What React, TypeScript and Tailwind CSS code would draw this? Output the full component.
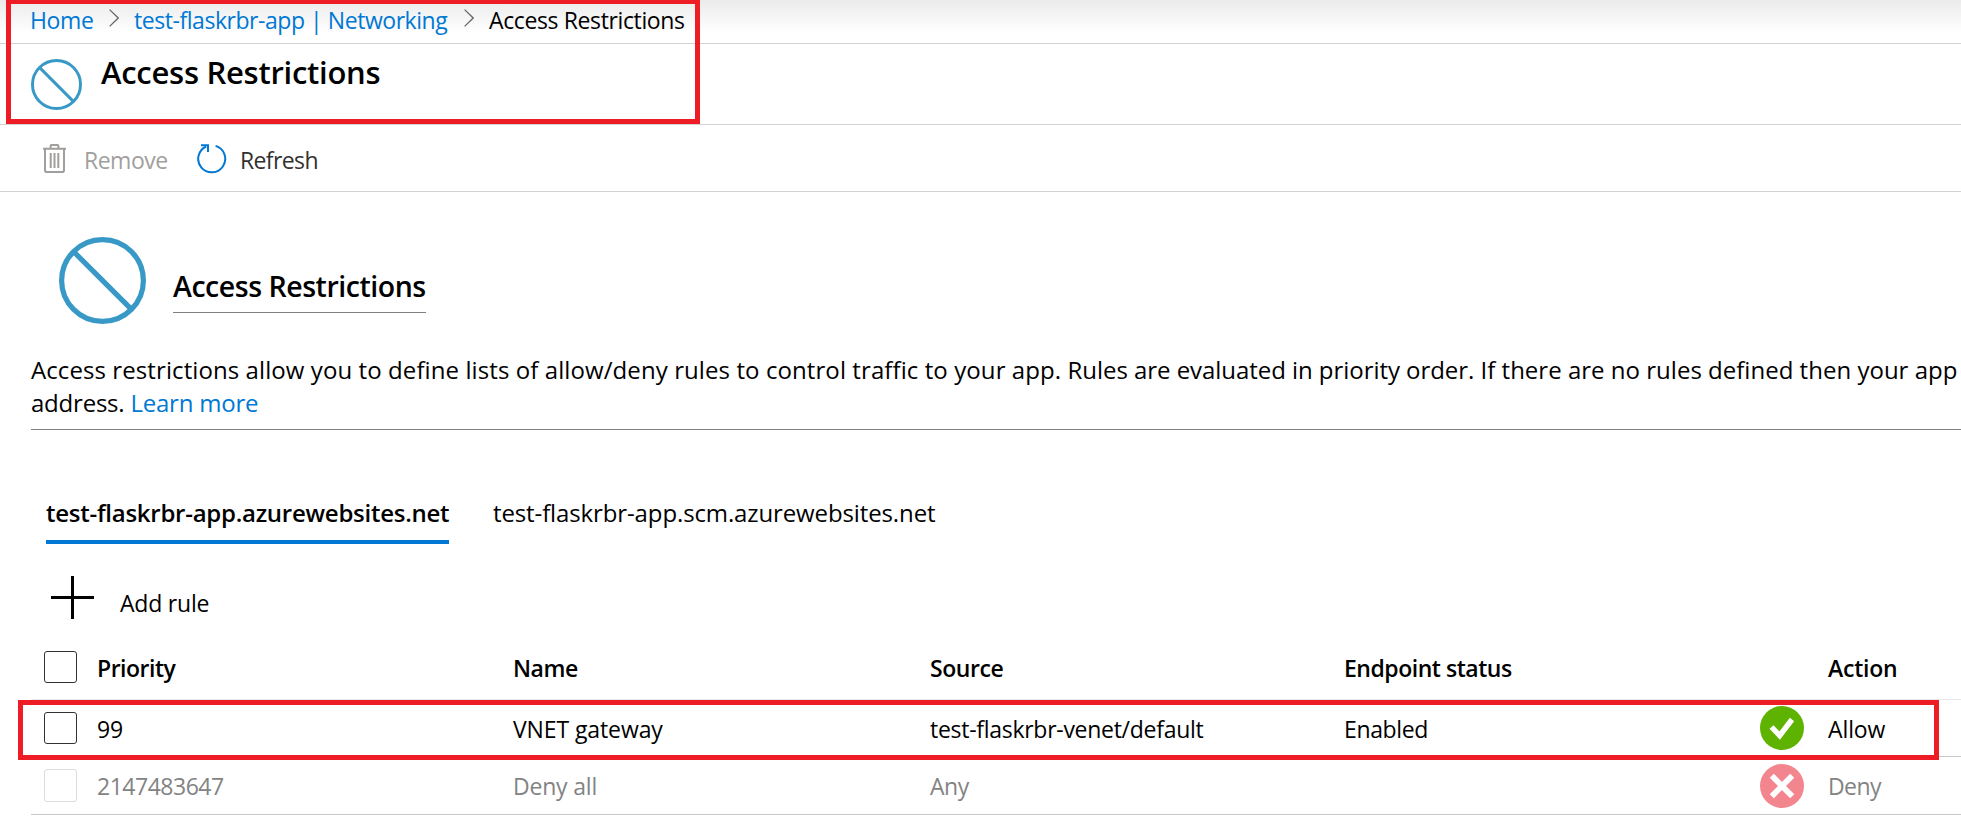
import React from "react";

function BlockedIcon({ className, strokeWidth }: { className: string; strokeWidth: number }) {
  const r = 50 - strokeWidth / 2;
  return (
    <svg viewBox="0 0 100 100" className={className} fill="none" stroke="#3999c6" strokeWidth={strokeWidth}>
      <circle cx="50" cy="50" r={r} />
      <path d="M17 17 83 83" />
    </svg>
  );
}

function Chevron({ className }: { className: string }) {
  return (
    <svg viewBox="0 0 10 18" className={className} fill="none" stroke="#666" strokeWidth="1.3">
      <path d="M0.6 0.6 9.2 9 0.6 17.4" />
    </svg>
  );
}

function TrashIcon() {
  return (
    <svg viewBox="0 0 23 29" className="h-[29px] w-[23px] shrink-0" fill="none" stroke="#a19f9d" strokeWidth="2">
      <path d="M0 4.7H23M7.6 4.5V1.8Q7.6 1 8.4 1H14.6Q15.4 1 15.4 1.8V4.5" />
      <path d="M2 4.7V26.2Q2 28 3.8 28H19.2Q21 28 21 26.2V4.7" />
      <path d="M7.7 9V24M11.5 9V24M15.3 9V24" />
    </svg>
  );
}

function RefreshIcon() {
  return (
    <svg viewBox="0 0 30 30" className="h-[30px] w-[30px] shrink-0" fill="none" stroke="#0078d4" strokeWidth="2">
      <path d="M18.6 1.9A13.5 13.5 0 1 1 9.2 2.5" />
      <path d="M4 1.3H11V8" />
    </svg>
  );
}

function AllowIcon() {
  return (
    <svg viewBox="0 0 44 44" className="h-[44px] w-[44px] shrink-0">
      <circle cx="22" cy="22" r="22" fill="#5db300" />
      <path d="M11.5 21 19.7 29.5 32 13.5" fill="none" stroke="#fff" strokeWidth="5.4" strokeLinejoin="miter" />
    </svg>
  );
}

function DenyIcon() {
  return (
    <svg viewBox="0 0 44 44" className="h-[44px] w-[44px] shrink-0">
      <circle cx="22" cy="22" r="22" fill="#f3858f" />
      <path d="M11.8 11.8 32.2 32.2M32.2 11.8 11.8 32.2" stroke="#fff" strokeWidth="5.8" />
    </svg>
  );
}

function Checkbox({ disabled = false }: { disabled?: boolean }) {
  return (
    <div
      className={
        disabled
          ? "ml-[13px] h-[33px] w-[33px] rounded-[3px] border border-[#dcdcdc]"
          : "ml-[13px] h-[32px] w-[33px] rounded-[3px] border border-[#323130]"
      }
    />
  );
}

const columns = "grid grid-cols-[66px_416px_417px_414px_416px_1fr] items-start whitespace-nowrap pl-[31px]";

export default function App() {
  return (
    <div className="relative h-[836px] w-[1961px] overflow-hidden bg-white font-['Open_Sans','Noto_Sans',sans-serif] text-[23px] leading-8 text-black">
      <nav className="flex h-[44px] items-start whitespace-nowrap border-b border-[#d2d2d2] bg-[linear-gradient(to_bottom,#ebebeb_0px,#ffffff_33px)] pl-[30px] pt-[4px]">
        <a className="w-[79px] tracking-[-0.34px] text-[#0078d4]">Home</a>
        <Chevron className="mt-[5px] h-[18px] w-[10px]" />
        <a className="ml-[15px] w-[330px] tracking-[-0.45px] text-[#0078d4]">test-flaskrbr-app | Networking</a>
        <Chevron className="mt-[5px] h-[18px] w-[10px]" />
        <span className="ml-[15px] tracking-[-0.38px]">Access Restrictions</span>
      </nav>

      <header className="flex h-[81px] items-start border-b border-[#d2d2d2] pl-[31px]">
        <BlockedIcon className="mt-[15px] h-[51px] w-[51px]" strokeWidth={5.8} />
        <h1 className="ml-[19px] mt-[8px] text-[31px] font-semibold leading-10 tracking-[-0.27px]">Access Restrictions</h1>
      </header>

      <div className="flex h-[67px] items-start border-b border-[#d2d2d2] pl-[43px] pt-[19px]">
        <div className="flex w-[154px] items-start gap-[18px] text-[#a19f9d]">
          <TrashIcon />
          <span className="tracking-[-0.5px]">Remove</span>
        </div>
        <div className="flex items-start gap-[13px] text-[#323130]">
          <RefreshIcon />
          <span className="tracking-[-0.62px]">Refresh</span>
        </div>
      </div>

      <section className="flex h-[161px] items-start pl-[59px] pt-[45px]">
        <BlockedIcon className="h-[87px] w-[87px]" strokeWidth={6} />
        <h2 className="ml-[27px] mt-[30px] h-[46px] w-[253px] whitespace-nowrap border-b border-[#808080] text-[28.5px] font-semibold leading-[38px] tracking-[-0.46px]">
          Access Restrictions
        </h2>
      </section>

      <div className="ml-[31px] h-[77px] whitespace-nowrap border-b border-[#808080] text-[24px] leading-[33px]">
        <p className="tracking-[0.015px]">
          <span className="tracking-[0.088px]">
            Access restrictions allow you to define lists of allow/deny rules to control traffic to your app.{" "}
          </span>
          <span className="tracking-[-0.05px]">Rules are evaluated in priority order. </span>
          If there are no rules defined then your app
        </p>
        <p className="tracking-[-0.22px]">
          address. <a className="text-[#0078d4]">Learn more</a>
        </p>
      </div>

      <div className="flex gap-[44px] whitespace-nowrap pl-[46px] pt-[67px] text-[24px]">
        <div className="h-[47px] w-[403px] border-b-4 border-[#0078d4] font-semibold tracking-[-0.262px]">
          test-flaskrbr-app.azurewebsites.net
        </div>
        <div className="tracking-[-0.12px]">test-flaskrbr-app.scm.azurewebsites.net</div>
      </div>

      <button className="mt-[32px] flex h-[76px] items-start pl-[51px] text-left">
        <svg viewBox="0 0 43 43" className="h-[43px] w-[43px]" stroke="#000" strokeWidth="3">
          <path d="M21.5 0V43M0 21.5H43" />
        </svg>
        <span className="ml-[26px] mt-[11px] tracking-[-0.2px]">Add rule</span>
      </button>

      <div className={columns + " h-[48px] border-b border-transparent font-semibold"}>
        <div className="-mt-px">
          <Checkbox />
        </div>
        <span className="tracking-[-0.49px]">Priority</span>
        <span className="tracking-[-0.41px]">Name</span>
        <span className="tracking-[-0.41px]">Source</span>
        <span className="tracking-[-0.47px]">Endpoint status</span>
        <span className="ml-[68px] tracking-[-0.21px]">Action</span>
      </div>
      <div className="-mt-px ml-[31px] h-px bg-[#e8e8e8]" />

      <div className={columns + " h-[56px] pt-[13px]"}>
        <div className="-mt-px">
          <Checkbox />
        </div>
        <span className="tracking-[-0.08px]">99</span>
        <span className="tracking-[-0.1px]">VNET gateway</span>
        <span className="tracking-[-0.28px]">test-flaskrbr-venet/default</span>
        <span className="tracking-[-0.35px]">Enabled</span>
        <div className="-mt-[7px] flex">
          <AllowIcon />
          <span className="ml-[24px] mt-[7px] tracking-[-0.1px]">Allow</span>
        </div>
      </div>
      <div className="ml-[31px] h-px bg-[#c8c8c8]" />

      <div className={columns + " h-[57px] pt-[13px] text-[#838383]"}>
        <div className="-mt-px">
          <Checkbox disabled />
        </div>
        <span className="tracking-[-0.48px]">2147483647</span>
        <span className="tracking-[-0.2px]">Deny all</span>
        <span className="tracking-[-0.5px]">Any</span>
        <span />
        <div className="-mt-[6px] flex">
          <DenyIcon />
          <span className="ml-[24px] mt-[6px] tracking-[-0.6px]">Deny</span>
        </div>
      </div>
      <div className="ml-[31px] h-px bg-[#c8c8c8]" />

      <div className="pointer-events-none absolute left-[6px] top-[-1px] h-[125px] w-[694px] border-[5px] border-[#ee1c25]" />
      <div className="pointer-events-none absolute left-[18px] top-[700px] h-[60px] w-[1921px] border-[5px] border-[#ee1c25]" />
    </div>
  );
}
